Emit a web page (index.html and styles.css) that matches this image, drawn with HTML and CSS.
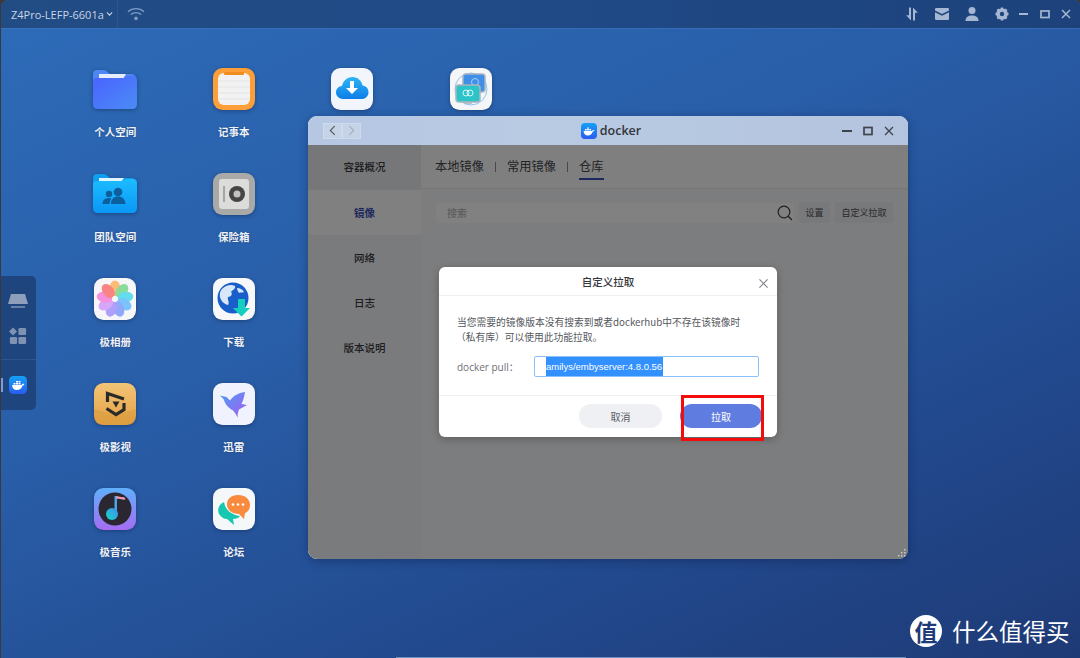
FILE: index.html
```html
<!DOCTYPE html>
<html lang="zh-CN">
<head>
<meta charset="utf-8">
<title>Z4Pro-LEFP-6601a</title>
<link rel="stylesheet" href="styles.css">
</head>
<body>
<div class="desktop">
  <header class="topbar">
    <div class="device"><span>Z4Pro-LEFP-6601a</span>
      <svg class="caret" viewBox="0 0 8 6" width="7" height="6"><path d="M1 1.200 4 4.400 7 1.200" fill="none" stroke="#c9d5e6" stroke-width="1.200"/></svg>
    </div>
    <div class="wifi">
      <svg viewBox="0 0 18 14" width="18" height="14"><g fill="none" stroke="#7e9bc4" stroke-width="1.300"><path d="M1 4.800C5.500 .6 12.500 .6 17 4.800"/><path d="M3.800 7.600C6.800 5 11.200 5 14.200 7.600"/></g><circle cx="9" cy="11.400" r="1.800" fill="#7e9bc4"/></svg>
    </div>
    <div class="tray">
      <svg viewBox="0 0 16 16" width="16" height="16"><path d="M7 1.500v13L2.200 9.300H5V1.500zM9 14.500v-13l4.800 5.200H11v7.800z" fill="#a5b7d3"/></svg>
      <svg viewBox="0 0 16 14" width="16" height="14"><path d="M1 2.200Q1 1 2.200 1h11.600Q15 1 15 2.200v1.300L8 7 1 3.500zM1 5.300l7 3.500 7-3.500v6.500Q15 13 13.800 13H2.200Q1 13 1 11.800z" fill="#a5b7d3"/></svg>
      <svg viewBox="0 0 16 16" width="16" height="16"><circle cx="8" cy="4.500" r="3.500" fill="#a5b7d3"/><path d="M1.500 15c0-4 2.800-5.500 6.500-5.500s6.500 1.500 6.500 5.500z" fill="#a5b7d3"/></svg>
      <svg viewBox="0 0 16 16" width="16" height="16"><circle cx="8" cy="8" r="4.300" fill="none" stroke="#a5b7d3" stroke-width="3"/><path d="M8 1.500v13M1.500 8h13M3.400 3.400l9.200 9.200M12.600 3.400l-9.200 9.200" stroke="#a5b7d3" stroke-width="2.400"/><circle cx="8" cy="8" r="2.200" fill="#1f4580"/></svg>
      <div class="tray-win">
        <svg viewBox="0 0 10 10" width="10" height="10"><path d="M0 5h9" stroke="#a5b7d3" stroke-width="2"/></svg>
        <svg viewBox="0 0 10 10" width="10" height="10"><rect x="1" y="2" width="8" height="6.500" fill="none" stroke="#a5b7d3" stroke-width="1.700"/></svg>
        <svg viewBox="0 0 10 10" width="10" height="10"><path d="M1 1l8 8M9 1 1 9" stroke="#a5b7d3" stroke-width="1.500"/></svg>
      </div>
    </div>
  </header>

  <aside class="dock">
    <div class="dock-group">
      <svg viewBox="0 0 22 16" width="22" height="16"><path d="M4 1h14l3 10H1z" fill="#8e9fbb"/><path d="M4 14h14" stroke="#8e9fbb" stroke-width="1.300"/></svg>
      <svg viewBox="0 0 20 20" width="18" height="18"><path d="M4.500 .5 9 5 4.500 9.500 0 5z" fill="#7f92b1"/><rect x="10.500" y="1" width="8.500" height="8" rx="1.500" fill="#7f92b1"/><rect x="1" y="11" width="8" height="8" rx="1.500" fill="#7f92b1"/><rect x="10.500" y="11" width="8.500" height="8" rx="1.500" fill="#7f92b1"/></svg>
    </div>
    <div class="dock-app">
      <span class="dock-mark"></span>
      <svg class="docker-logo" viewBox="0 0 18 18" width="18" height="18"><defs><linearGradient id="dk" x1="0" y1="0" x2="0" y2="1"><stop offset="0" stop-color="#14a0f5"/><stop offset="1" stop-color="#2a5cf0"/></linearGradient></defs><rect width="18" height="18" rx="4.500" fill="url(#dk)"/><path d="M3 9h9.500c.6-1.300 1.700-1.500 2.800-1-.3 1-1 1.500-1.900 1.700C12.600 12.700 10.600 14 7.800 14 4.800 14 3.300 12 3 9z" fill="#fff"/><path d="M4.500 6.900h2v1.500h-2zM7 6.900h2v1.500H7zM9.500 6.900h2v1.500h-2zM7 4.900h2v1.500H7zM9.500 4.900h2v1.500h-2z" fill="#fff"/></svg>
    </div>
  </aside>

  <main class="apps">
    <div class="app">
      <svg class="app-icon" viewBox="0 0 46 42" width="46" height="42"><defs><linearGradient id="fb" x1="0" y1="0" x2="1" y2="1"><stop offset="0" stop-color="#4a62ff"/><stop offset="1" stop-color="#4b8cf6"/></linearGradient></defs><path d="M1 6q0-4 4-4h7q2 0 3.500 2L18 6h21q5 0 5 5v6H1z" fill="#4d86f5"/><path d="M7 6h27l-3 5H7z" fill="#e6ecfb"/><path d="M1 14q0-4 4-4h26q2 0 3-1 1-1 3-1h4q4 0 4 4v24q0 5-5 5H6q-5 0-5-5z" fill="url(#fb)"/></svg>
      <span class="app-name">个人空间</span>
    </div>
    <div class="app">
      <svg class="app-icon" viewBox="0 0 42 42" width="42" height="42"><rect width="42" height="42" rx="9.500" fill="#fd9f38"/><rect x="5" y="5" width="32" height="32" rx="6" fill="#f2f2f2"/><rect x="11" y="4" width="20" height="3" rx="1" fill="#f08d20"/><path d="M5 13h32M5 19h32M5 25h32M5 31h32" stroke="#e4e4e4"/></svg>
      <span class="app-name">记事本</span>
    </div>
    <div class="app">
      <svg class="app-icon" viewBox="0 0 42 42" width="42" height="42"><defs><linearGradient id="cloud" x1="0" y1="0" x2="0" y2="1"><stop offset="0" stop-color="#2cb5f5"/><stop offset="1" stop-color="#0f7ee8"/></linearGradient></defs><rect width="42" height="42" rx="9.500" fill="#f2f5fb"/><path d="M12 31c-4 0-7-3-7-6.500S7.500 18 11 18c1-5 5-9 10.500-9 5 0 9 3.500 10 8.500 3.500.3 6 3 6 6.700 0 3.800-3 6.800-7 6.800z" fill="url(#cloud)"/><path d="M19 13h4v7h4l-6 6-6-6h4z" fill="#fff"/></svg>
      <span class="app-name app-hidden"></span>
    </div>
    <div class="app">
      <svg class="app-icon" viewBox="0 0 42 42" width="42" height="42"><rect width="42" height="42" rx="9.500" fill="#f5f6f8"/><circle cx="21" cy="21" r="16" fill="none" stroke="#8fc2f3"/><rect x="13" y="6" width="22" height="18" rx="3" fill="#3f8ee8" stroke="#a8b2bf" stroke-width="1.500"/><circle cx="25" cy="14" r="3.500" fill="none" stroke="#a7d0f5"/><rect x="6" y="17" width="24" height="17" rx="3" fill="#2bc4c9" stroke="#aab4bc" stroke-width="1.500"/><circle cx="16" cy="25" r="3" fill="none" stroke="#d9f6f6"/><circle cx="20" cy="25" r="3" fill="none" stroke="#d9f6f6"/><path d="M14 35h8" stroke="#aab4bc" stroke-width="1.500"/></svg>
      <span class="app-name app-hidden"></span>
    </div>
    <div class="app">
      <svg class="app-icon" viewBox="0 0 46 42" width="46" height="42"><defs><linearGradient id="ft" x1="0" y1="0" x2="0" y2="1"><stop offset="0" stop-color="#1cbcff"/><stop offset="1" stop-color="#0a98f6"/></linearGradient></defs><path d="M1 5q0-4 4-4h7q2 0 3.500 2L18 5h21q5 0 5 5v6H1z" fill="#0e9ef0"/><path d="M7 5h25l-3 4H7z" fill="#dff5ff"/><path d="M1 12q0-4 4-4h24q2 0 3-1 1-1 3-1h6q4 0 4 4v25q0 5-5 5H6q-5 0-5-5z" fill="url(#ft)"/><g fill="#0c5e9c"><circle cx="17" cy="21" r="3.200"/><circle cx="26" cy="19" r="4.300"/><path d="M10.500 31c0-4 3-6 6-6 1 0 2 .2 3 .7-1.500 1.500-2 3.300-2 5.300zM19 31c0-5 3-7.500 7-7.500s7.500 2.500 7.500 7.500z"/></g></svg>
      <span class="app-name">团队空间</span>
    </div>
    <div class="app">
      <svg class="app-icon" viewBox="0 0 42 42" width="42" height="42"><rect width="42" height="42" rx="9.500" fill="#a9a9a7"/><rect x="6" y="6" width="30" height="30" rx="3" fill="#dcdcda"/><rect x="10" y="13" width="2" height="16" fill="#a5a5a3"/><circle cx="24" cy="21" r="8" fill="#454545"/><circle cx="24" cy="21" r="3.500" fill="#c2c2c0"/></svg>
      <span class="app-name">保险箱</span>
    </div>
    <div class="app app-blank"></div>
    <div class="app app-blank"></div>
    <div class="app">
      <svg class="app-icon" viewBox="0 0 42 42" width="42" height="42"><rect width="42" height="42" rx="9.500" fill="#f7f7f9"/><g transform="translate(21 21)" opacity=".88"><ellipse cy="-10.500" rx="5.400" ry="8" fill="#fdb564"/><ellipse cy="-10.500" rx="5.400" ry="8" fill="#7fd88f" transform="rotate(40)"/><ellipse cy="-10.500" rx="5.400" ry="8" fill="#4fdaea" transform="rotate(80)"/><ellipse cy="-10.500" rx="5.400" ry="8" fill="#6bbcfb" transform="rotate(120)"/><ellipse cy="-10.500" rx="5.400" ry="8" fill="#829cfb" transform="rotate(160)"/><ellipse cy="-10.500" rx="5.400" ry="8" fill="#a394fb" transform="rotate(200)"/><ellipse cy="-10.500" rx="5.400" ry="8" fill="#d29cf8" transform="rotate(240)"/><ellipse cy="-10.500" rx="5.400" ry="8" fill="#f582da" transform="rotate(280)"/><ellipse cy="-10.500" rx="5.400" ry="8" fill="#fb7474" transform="rotate(320)"/></g><circle cx="21" cy="21" r="3" fill="#f7f7f9"/></svg>
      <span class="app-name">极相册</span>
    </div>
    <div class="app">
      <svg class="app-icon" viewBox="0 0 42 42" width="42" height="42"><rect width="42" height="42" rx="9.500" fill="#f7f8fa"/><circle cx="20" cy="20" r="15.500" fill="#1a5fc9"/><path d="M9 11c4-4 9-5 13-3 1 3-3 4-4 6 2 2 0 5-3 5-1 3 2 5 0 8-4-1-7-4-8-8-.6-3 0-6 2-8zM24 10c3 0 5 1 7 4-2 1-4 0-5 1-1-2-2-3-2-5z" fill="#d8e8f8"/><path d="M25 21h7v9h5l-8.500 8.500L20 30h5z" fill="#14cfc0"/></svg>
      <span class="app-name">下载</span>
    </div>
    <div class="app app-blank"></div>
    <div class="app app-blank"></div>
    <div class="app">
      <svg class="app-icon" viewBox="0 0 42 42" width="42" height="42"><defs><linearGradient id="gold" x1="0" y1="0" x2="0" y2="1"><stop offset="0" stop-color="#f3c477"/><stop offset="1" stop-color="#e4a144"/></linearGradient></defs><rect width="42" height="42" rx="9.500" fill="url(#gold)"/><path d="M0 26 21 32 42 26V32.500Q42 42 32.500 42H9.500Q0 42 0 32.500z" fill="#d99a3e" opacity=".55"/><g fill="none" stroke="#2c2a28" stroke-width="3.200"><path d="M13.500 19V10.500L30 16"/><path d="M30 20v6.500L22 31.500 12.500 25.500"/></g><path d="M18.500 18.500h7L22 24.500z" fill="#2c2a28"/></svg>
      <span class="app-name">极影视</span>
    </div>
    <div class="app">
      <svg class="app-icon" viewBox="0 0 42 42" width="42" height="42"><defs><linearGradient id="bird" x1="0" y1="0" x2="1" y2="1"><stop offset="0" stop-color="#4c9cf5"/><stop offset="1" stop-color="#a55df0"/></linearGradient></defs><rect width="42" height="42" rx="9.500" fill="#f0f2fd"/><path d="M7 12.500l6.500 1.500 3.500 3.500C20 13 25 10 32 9c-.7 4.500-1.800 8.500-3.500 12L34 22l-8 4.500c-1 2.500-1.500 5-1.300 8-1.700-3.500-3.200-5.500-5.200-7.500-4.500-2-7.500-6.500-9-11z" fill="url(#bird)"/></svg>
      <span class="app-name">迅雷</span>
    </div>
    <div class="app app-blank"></div>
    <div class="app app-blank"></div>
    <div class="app">
      <svg class="app-icon" viewBox="0 0 42 42" width="42" height="42"><defs><linearGradient id="music" x1="0" y1="0" x2="0" y2="1"><stop offset="0" stop-color="#5fb0fb"/><stop offset="1" stop-color="#a56cf2"/></linearGradient><linearGradient id="note" x1="0" y1="1" x2="1" y2="0"><stop offset="0" stop-color="#18d6c6"/><stop offset="1" stop-color="#3d8ef0"/></linearGradient></defs><rect width="42" height="42" rx="9.500" fill="url(#music)"/><circle cx="21" cy="21" r="16.500" fill="#2b2730"/><path d="M23 8v17h-2.500V8z" fill="#4aa5ea"/><path d="M22 8c3 0 6 2 8 1 1 1 1 2 2 2-3 2-5-1-9 0z" fill="#f49ab0"/><circle cx="18" cy="26" r="6" fill="url(#note)"/></svg>
      <span class="app-name">极音乐</span>
    </div>
    <div class="app">
      <svg class="app-icon" viewBox="0 0 42 42" width="42" height="42"><rect width="42" height="42" rx="9.500" fill="#f4f8f8"/><path d="M11 14c-5 2-7 7-5 12 2 3 5 5 8 5l7 6-1-6c3 0 6-1 7-3-8-1-15-6-16-14z" fill="#18c7b0"/><path d="M25 7c7 0 12 4 12 10 0 4-2 7-5 8l-1 6-5-5c-7 0-12-4-12-9.500S18 7 25 7z" fill="#fa8a3e"/><g fill="#fff"><circle cx="20" cy="16.500" r="1.300"/><circle cx="25" cy="16.500" r="1.300"/><circle cx="30" cy="16.500" r="1.300"/></g></svg>
      <span class="app-name">论坛</span>
    </div>
  </main>

  <section class="window">
    <div class="win-title">
      <div class="nav-btns">
        <span class="nav-btn"><svg viewBox="0 0 8 12" width="7" height="11"><path d="M6.500 1 1.500 6l5 5" fill="none" stroke="#555" stroke-width="1.300"/></svg></span>
        <span class="nav-btn"><svg viewBox="0 0 8 12" width="7" height="11"><path d="M1.500 1l5 5-5 5" fill="none" stroke="#a9adb4" stroke-width="1.300"/></svg></span>
      </div>
      <div class="win-name">
        <svg viewBox="0 0 16 16" width="16" height="16"><defs><linearGradient id="dk2" x1="0" y1="0" x2="0" y2="1"><stop offset="0" stop-color="#14a0f5"/><stop offset="1" stop-color="#2a5cf0"/></linearGradient></defs><rect width="16" height="16" rx="4" fill="url(#dk2)"/><path d="M2.500 8h8.500c.5-1.100 1.500-1.300 2.500-.9-.3.9-.9 1.300-1.700 1.500C11 11.200 9.200 12.500 6.800 12.500 4.200 12.500 2.800 10.500 2.500 8z" fill="#fff"/><path d="M4 6.100h1.700v1.300H4zM6.200 6.100h1.700v1.300H6.200zM8.400 6.100h1.700v1.300H8.400zM6.200 4.400h1.700v1.300H6.200z" fill="#fff"/></svg>
        <span>docker</span>
      </div>
      <div class="win-ctrls">
        <svg viewBox="0 0 10 10" width="10" height="10"><path d="M0 5h10" stroke="#3f434a" stroke-width="2"/></svg>
        <svg viewBox="0 0 10 10" width="10" height="10"><rect x="1" y="1.500" width="8" height="7" fill="none" stroke="#3f434a" stroke-width="1.700"/></svg>
        <svg viewBox="0 0 10 10" width="10" height="10"><path d="M1 1l8 8M9 1 1 9" stroke="#3f434a" stroke-width="1.300"/></svg>
      </div>
    </div>
    <div class="win-body">
      <nav class="side">
        <div class="side-item side-top">容器概况</div>
        <div class="side-item side-active">镜像</div>
        <div class="side-item">网络</div>
        <div class="side-item">日志</div>
        <div class="side-item">版本说明</div>
      </nav>
      <div class="content">
        <div class="tabs">
          <span class="tab">本地镜像</span><i class="tab-sep"></i>
          <span class="tab">常用镜像</span><i class="tab-sep"></i>
          <span class="tab tab-on">仓库</span>
        </div>
        <div class="toolbar">
          <div class="search">
            <span>搜索</span>
            <svg viewBox="0 0 16 16" width="16" height="16"><circle cx="7" cy="7" r="5.800" fill="none" stroke="#3d3e40" stroke-width="1.200"/><path d="M11.200 11.200 15 15" stroke="#3d3e40" stroke-width="1.300"/></svg>
          </div>
          <span class="tool-btn">设置</span>
          <span class="tool-btn">自定义拉取</span>
        </div>
      </div>
    </div>
    <div class="veil">
      <div class="dialog">
        <div class="dlg-head">
          <span>自定义拉取</span>
          <svg class="dlg-close" viewBox="0 0 10 10" width="9" height="9"><path d="M.5.500l9 9M9.500.500l-9 9" stroke="#7f8288" stroke-width="1.300"/></svg>
        </div>
        <div class="dlg-body">
          <p class="dlg-text">当您需要的镜像版本没有搜索到或者dockerhub中不存在该镜像时<br><span class="dlg-indent">（私有库）可以使用此功能拉取。</span></p>
          <div class="dlg-row">
            <label class="dlg-label">docker pull：</label>
            <div class="dlg-input"><span class="selected">amilys/embyserver:4.8.0.56</span></div>
          </div>
        </div>
        <div class="dlg-foot">
          <span class="btn btn-cancel">取消</span>
          <span class="btn btn-ok">拉取</span>
        </div>
        <div class="red-mark"></div>
      </div>
    </div>
    <svg class="grip" viewBox="0 0 8 8" width="8" height="8"><g fill="#c9c9c9"><rect x="6" y="0" width="1.500" height="1.500"/><rect x="3" y="3" width="1.500" height="1.500"/><rect x="6" y="3" width="1.500" height="1.500"/><rect x="0" y="6" width="1.500" height="1.500"/><rect x="3" y="6" width="1.500" height="1.500"/><rect x="6" y="6" width="1.500" height="1.500"/></g></svg>
  </section>

  <div class="watermark">
    <span class="wm-badge">值</span>
    <span class="wm-text">什么值得买</span>
  </div>
  <div class="edge-strip"></div>
</div>
</body>
</html>
```

FILE: styles.css
```css
* { box-sizing: border-box; }
html, body { margin: 0; padding: 0; width: 1080px; height: 658px; overflow: hidden; }
body { font-family: "Noto Sans CJK SC", "Noto Sans", sans-serif; background: #3a3a3c; }

.desktop {
  position: relative;
  width: 1080px;
  height: 658px;
  margin-left: 1px;
  border-radius: 8px 8px 0 0;
  overflow: hidden;
  background: linear-gradient(155deg, #2d6bb8 0%, #295ea8 40%, #224a8f 72%, #1e3a76 100%);
}

/* top bar */
.topbar {
  display: flex;
  align-items: center;
  height: 28px;
  background: linear-gradient(90deg, #214c84, #1f4a86 50%, #1d427b);
  box-shadow: 0 1px 0 rgba(70, 120, 190, .5);
}
.device {
  display: flex;
  align-items: center;
  gap: 2px;
  flex: none;
  width: 117px;
  height: 28px;
  padding-left: 10px;
  font-family: "Open Sans", "Noto Sans", sans-serif;
  font-size: 11px;
  color: #c9d5e6;
  white-space: nowrap;
  border-right: 1px solid #2a5790;
}
.caret { flex: none; }
.wifi { display: flex; margin-left: 9px; }
.tray {
  display: flex;
  align-items: center;
  gap: 14px;
  margin-left: auto;
  padding-right: 10px;
}
.tray-win { display: flex; align-items: center; gap: 11px; margin-left: -5px; }

/* dock */
.dock {
  position: absolute;
  left: 0;
  top: 276px;
  width: 35px;
  height: 134px;
  display: flex;
  flex-direction: column;
  background: #1f457f;
  border-radius: 0 5px 5px 0;
}
.dock-group {
  display: flex;
  flex-direction: column;
  align-items: center;
  gap: 18px;
  height: 84px;
  padding: 17px 1px 0 0;
  border-bottom: 1px solid #2b5590;
}
.dock-app { position: relative; display: flex; justify-content: center; padding: 16px 1px 0 0; }
.dock-mark { position: absolute; left: 0; top: 18px; width: 2px; height: 14px; background: #7d9be0; }

/* desktop icons */
.apps {
  position: absolute;
  left: 55px;
  top: 68px;
  display: grid;
  grid-template-columns: repeat(4, 118.500px);
  grid-auto-rows: 105px;
}
.app { display: flex; flex-direction: column; align-items: center; }
.app-icon { display: block; height: 42px; filter: drop-shadow(0 1px 2px rgba(10, 30, 70, .45)); }
.app-name {
  margin-top: 14px;
  font-size: 10.500px;
  line-height: 16px;
  font-weight: 700;
  color: #eef2f8;
  text-shadow: 0 0 2px rgba(20, 40, 80, .5);
}
.app-hidden { visibility: hidden; }

/* window */
.window {
  position: absolute;
  left: 307px;
  top: 116px;
  width: 600px;
  height: 443px;
  border-radius: 9px;
  overflow: hidden;
  box-shadow: 0 2px 10px rgba(10, 25, 60, .4);
  background: #f4f5f7;
}
.win-title {
  display: grid;
  grid-template-columns: 1fr auto 1fr;
  align-items: center;
  height: 29px;
  padding: 0 14px 0 15px;
  background: linear-gradient(90deg, #b5c7e3, #b9cae3 40%, #b4c4de);
}
.nav-btns { display: flex; }
.nav-btn {
  display: flex;
  align-items: center;
  justify-content: center;
  width: 19px;
  height: 16px;
  background: #c5d3e8;
  border: 1px solid #cfdaeb;
}
.win-name {
  display: flex;
  align-items: center;
  gap: 3px;
  margin-left: 5px;
  font-family: "Open Sans", sans-serif;
  font-size: 12.500px;
  font-weight: 600;
  color: #33363b;
}
.win-ctrls { display: flex; gap: 11px; align-items: center; justify-content: flex-end; }
.win-body { display: flex; height: 414px; }
.side { width: 113px; background: #f0f1f4; flex: none; }
.side-item {
  height: 45px;
  display: flex;
  align-items: center;
  justify-content: center;
  font-size: 10.500px;
  font-weight: 500;
  color: #383a3e;
}
.side-top { padding-bottom: 2px; background: #e8e9ec; }
.side-active { background: #fbfbfc; color: #3b4fb5; font-weight: 700; }
.content { flex: 1; }
.tabs {
  display: flex;
  align-items: center;
  height: 44px;
  padding-left: 14px;
  background: #f9f9fa;
  border-bottom: 1px solid #e6e6e8;
}
.tab {
  position: relative;
  font-size: 12.250px;
  line-height: 42px;
  margin-bottom: 2px;
  color: #44464a;
  white-space: nowrap;
}
.tab-on::after {
  content: "";
  position: absolute;
  left: 0;
  right: 0;
  bottom: 7px;
  height: 1.500px;
  background: #3b4fb5;
}
.tab-sep { width: 1px; height: 10px; margin: 0 11px; background: #8b8d91; }
.toolbar {
  display: flex;
  align-items: center;
  gap: 5px;
  padding: 13px 0 0 15px;
}
.search {
  display: flex;
  align-items: center;
  justify-content: space-between;
  width: 358px;
  height: 20px;
  padding: 0 1px 0 11px;
  background: #fcfcfd;
  border-radius: 3px;
  font-size: 10px;
  color: #a8a9ad;
}
.tool-btn {
  height: 21px;
  padding: 0 6.500px;
  line-height: 21px;
  font-size: 9px;
  color: #4f5156;
  background: #ecedf0;
  border-radius: 3px;
}

/* veil + dialog */
.veil {
  position: absolute;
  inset: 0;
  padding-top: 151px;
  display: flex;
  justify-content: center;
  align-items: flex-start;
  background: linear-gradient(rgba(0, 0, 0, 0), rgba(0, 0, 0, 0) 29px, rgba(0, 0, 0, .49) 29px);
}
.dialog {
  position: relative;
  width: 338px;
  height: 170px;
  background: #fff;
  border-radius: 6px;
  box-shadow: 0 2px 8px rgba(0, 0, 0, .25);
}
.dlg-head {
  position: relative;
  display: flex;
  align-items: center;
  justify-content: center;
  height: 29px;
  font-size: 10.500px;
  font-weight: 500;
  color: #33363b;
  border-bottom: 1px solid #eeeff1;
}
.dlg-close { position: absolute; right: 9px; top: 12px; }
.dlg-body { height: 100px; padding: 19px 18px 0; border-bottom: 1px solid #eeeff1; }
.dlg-text { margin: 0; font-size: 9.750px; line-height: 15px; color: #55585d; white-space: nowrap; }
.dlg-indent { margin-left: -1px; }
.dlg-row { display: flex; align-items: center; margin-top: 11px; }
.dlg-label { width: 77px; font-size: 10px; color: #6c6f75; font-family: "Open Sans", "Noto Sans CJK SC", sans-serif; white-space: nowrap; }
.dlg-input {
  width: 225px;
  height: 21px;
  padding-left: 11px;
  border: 1px solid #8cc0fb;
  border-radius: 2px;
  font-family: "Liberation Sans", sans-serif;
  font-size: 9.500px;
  line-height: 19px;
  color: #fff;
}
.selected { display: inline-block; height: 19px; width: 117px; white-space: nowrap; background: #3390ff; }
.dlg-foot {
  display: flex;
  justify-content: flex-end;
  gap: 18px;
  padding: 8px 15px 0 0;
}
.btn {
  display: flex;
  align-items: center;
  justify-content: center;
  width: 83px;
  height: 24px;
  border-radius: 12px;
  font-size: 10px;
}
.btn-cancel { background: #eff0f3; color: #5a5d63; }
.btn-ok { width: 82px; background: #5f7de0; color: #fff; }
.red-mark {
  position: absolute;
  left: 242px;
  top: 128px;
  width: 83px;
  height: 46px;
  border: 3px solid #f40b0b;
}
.grip { position: absolute; right: 2px; bottom: 2px; }

/* watermark */
.watermark {
  position: absolute;
  left: 909px;
  top: 615px;
  display: flex;
  align-items: center;
  gap: 10px;
}
.wm-badge {
  display: flex;
  align-items: center;
  justify-content: center;
  width: 32px;
  height: 32px;
  border-radius: 50%;
  background: #fff;
  color: #1e3b78;
  font-size: 23px;
  font-weight: 700;
  line-height: 1;
}
.wm-text { font-size: 23.500px; line-height: 32px; color: #fff; white-space: nowrap; }
.edge-strip {
  position: absolute;
  left: 395px;
  bottom: 0;
  width: 510px;
  height: 1px;
  background: #6d8fbf;
}
```
